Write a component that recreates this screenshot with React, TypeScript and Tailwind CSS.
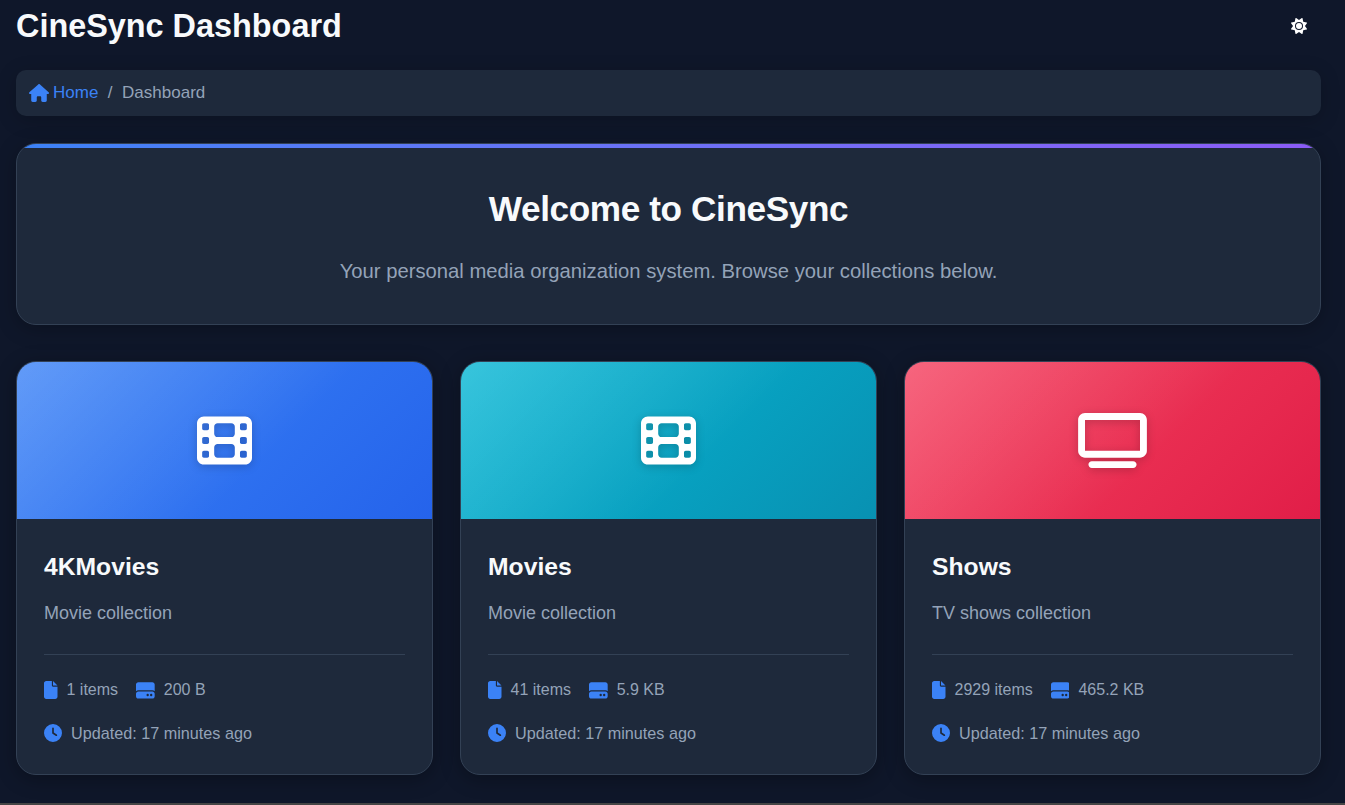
import { FaClock, FaFile, FaFilm, FaHardDrive, FaHouse, FaSun, FaTv } from "react-icons/fa6"
import type { IconType } from "react-icons"

type Collection = {
  name: string
  description: string
  items: string
  size: string
  Icon: IconType
  iconSize: string
  gradient: string
}

const collections: Collection[] = [
  {
    name: "4KMovies",
    description: "Movie collection",
    items: "1 items",
    size: "200 B",
    Icon: FaFilm,
    iconSize: "h-[55px] w-[55px]",
    gradient: "bg-linear-135 from-[#3b82f6] to-[#2563eb]",
  },
  {
    name: "Movies",
    description: "Movie collection",
    items: "41 items",
    size: "5.9 KB",
    Icon: FaFilm,
    iconSize: "h-[55px] w-[55px]",
    gradient: "bg-linear-135 from-[#06b6d4] to-[#0891b2]",
  },
  {
    name: "Shows",
    description: "TV shows collection",
    items: "2929 items",
    size: "465.2 KB",
    Icon: FaTv,
    iconSize: "h-[55px] w-[69px]",
    gradient: "bg-linear-135 from-[#f43f5e] to-[#e11d48]",
  },
]

function CollectionCard({ name, description, items, size, Icon, iconSize, gradient }: Collection) {
  return (
    <div className="overflow-hidden rounded-[20px] border border-[#334155] bg-[#1e293b] shadow-[0_4px_20px_rgba(0,0,0,0.3)]">
      <div className={`relative flex h-[157px] items-center justify-center ${gradient}`}>
        {/* light sheen over the top left half */}
        <div className="absolute inset-0 bg-linear-135 from-white/20 to-transparent to-60%" />
        <Icon className={`relative ${iconSize} text-white drop-shadow-[0_2px_4px_rgba(0,0,0,0.2)]`} />
      </div>
      <div className="px-[27px] pt-[33px] pb-[30px]">
        <h3 className="text-[24.7px] leading-[30px] font-bold text-[#f8fafc]">{name}</h3>
        <p className="mt-[19px] text-[18px] leading-[24px] text-[#94a3b8]">{description}</p>
        <div className="mt-[29px] border-t border-[#334155] pt-[24px] text-[16px] leading-[22px] text-[#94a3b8]">
          <div className="flex items-center gap-[18px]">
            <span className="flex items-center gap-[9px]">
              <FaFile className="h-[18px] w-[13.5px] text-[#3b82f6]" />
              {items}
            </span>
            <span className="flex items-center gap-[9px]">
              <FaHardDrive className="text-[18.7px] text-[#3b82f6]" />
              {size}
            </span>
          </div>
          <div className="mt-[21px] flex items-center gap-[9px] text-[16.2px]">
            <FaClock className="text-[18px] text-[#3b82f6]" />
            Updated: 17 minutes ago
          </div>
        </div>
      </div>
    </div>
  )
}

export default function App() {
  return (
    <div className="flex h-[805px] flex-col overflow-hidden bg-[#0f172a] font-['Liberation_Sans',Arial,sans-serif]">
      <div className="flex-1 pr-[24px] pl-[16px]">
        <header className="flex h-[52px] items-center justify-between">
          <h1 className="text-[32.4px] font-bold text-[#f8fafc]">CineSync Dashboard</h1>
          <button className="mr-[14px] text-[16px] text-white">
            <FaSun />
          </button>
        </header>

        <nav className="mt-[18px] flex h-[46px] items-center rounded-[10px] bg-[#1e293b] px-[13px] text-[17px] shadow-[0_4px_20px_rgba(0,0,0,0.2)]">
          <a className="flex items-center gap-[4px] text-[#3b82f6]">
            <FaHouse className="text-[20px]" />
            Home
          </a>
          <span className="mx-[9.5px] text-[#94a3b8]">/</span>
          <span className="text-[#94a3b8]">Dashboard</span>
        </nav>

        <section className="relative mt-[27px] h-[182px] overflow-hidden rounded-[20px] border border-[#334155] bg-[#1e293b] text-center shadow-[0_4px_20px_rgba(0,0,0,0.25)]">
          <div className="absolute inset-x-0 top-0 h-[4px] bg-gradient-to-r from-[#3b82f6] to-[#8b5cf6]" />
          <h2 className="pt-[43px] text-[35.2px] leading-[44px] font-bold tracking-[-0.4px] text-[#f8fafc]">
            Welcome to CineSync
          </h2>
          <p className="mt-[26px] text-[20.25px] leading-[28px] text-[#94a3b8]">
            Your personal media organization system. Browse your collections below.
          </p>
        </section>

        <div className="mt-[36px] grid grid-cols-3 gap-[27px]">
          {collections.map((c) => (
            <CollectionCard key={c.name} {...c} />
          ))}
        </div>
      </div>
      <div className="h-[2px] bg-[#454545]" />
    </div>
  )
}
